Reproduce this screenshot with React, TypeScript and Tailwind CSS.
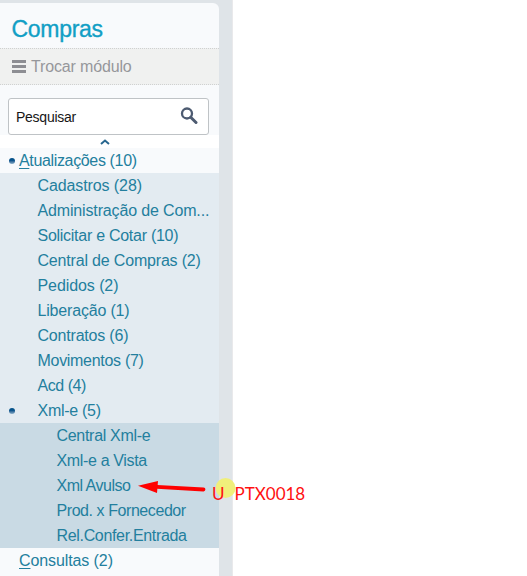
type Item = { label: string; tracking: string; open?: boolean };

const groups: Item[] = [
  { label: 'Cadastros (28)', tracking: 'tracking-[-0.1px]' },
  { label: 'Administração de Com...', tracking: 'tracking-[-0.15px]' },
  { label: 'Solicitar e Cotar (10)', tracking: 'tracking-[-0.27px]' },
  { label: 'Central de Compras (2)', tracking: 'tracking-[-0.18px]' },
  { label: 'Pedidos (2)', tracking: 'tracking-[-0.08px]' },
  { label: 'Liberação (1)', tracking: 'tracking-[-0.18px]' },
  { label: 'Contratos (6)', tracking: 'tracking-[-0.2px]' },
  { label: 'Movimentos (7)', tracking: 'tracking-[-0.3px]' },
  { label: 'Acd (4)', tracking: 'tracking-[-0.45px]' },
  { label: 'Xml-e (5)', tracking: 'tracking-[-0.28px]', open: true },
];

const routines: Item[] = [
  { label: 'Central Xml-e', tracking: 'tracking-[-0.3px]' },
  { label: 'Xml-e a Vista', tracking: 'tracking-[-0.35px]' },
  { label: 'Xml Avulso', tracking: 'tracking-[-0.5px]' },
  { label: 'Prod. x Fornecedor', tracking: 'tracking-[-0.43px]' },
  { label: 'Rel.Confer.Entrada', tracking: 'tracking-[-0.33px]' },
];

function Bullet() {
  return <span className="h-[6px] w-[6px] shrink-0 rounded-full bg-linear-to-b from-[#06538b] from-40% to-[#8bb0c9]" />;
}

function Row({ item, indent }: { item: Item; indent: string }) {
  return (
    <div className="flex h-[25px] items-center pl-[9px]">
      <span className="flex w-[6px] shrink-0">{item.open && <Bullet />}</span>
      <span className={`${indent} ${item.tracking} whitespace-nowrap`}>{item.label}</span>
    </div>
  );
}

export default function App() {
  return (
    <div className="relative h-[576px] w-[527px] overflow-hidden bg-white font-['Liberation_Sans',Arial,sans-serif]">
      <div className="h-full w-[233px] border-r border-[#e9e9eb] bg-[#dfe4e8] pt-[3px]">
        <aside className="h-full w-[219px] overflow-hidden rounded-tr-[6px] bg-[#f8fafc] text-[16px] leading-[25px] text-[#237f9e]">
          <h1 className="flex h-[45px] items-center pt-[8px] pl-[11.5px] text-[23px] tracking-[-0.3px] text-[#129fc5] [-webkit-text-stroke:0.35px_#129fc5]">Compras</h1>
          <div className="flex h-[37px] items-center border-y border-dotted border-[#cfd1d1] bg-[#f0f1f0] pl-[12px] text-[16px] tracking-[-0.15px] text-[#96979b]">
            <span className="mr-[5px] flex flex-col gap-[2px]">
              <i className="h-[3px] w-[14px] bg-[#8d8e93]" />
              <i className="h-[3px] w-[14px] bg-[#8d8e93]" />
              <i className="h-[3px] w-[14px] bg-[#8d8e93]" />
            </span>
            <span className="pb-px">Trocar módulo</span>
          </div>
          <div className="mt-[13px] ml-[8px] flex h-[37px] w-[201px] items-center rounded-[3px] border border-[#bfc3c6] bg-white pl-[7px] text-[14px] tracking-[-0.25px] text-[#161616]">
            <span className="pt-px">Pesquisar</span>
            <svg className="mt-[-2px] mr-[10px] ml-auto" width="18" height="18" viewBox="0 0 18 18" fill="none" stroke="#4d5b71">
              <circle cx="7" cy="6.5" r="5" strokeWidth="2.3" />
              <path d="M10.7 10.2 16 15.5" strokeWidth="3" strokeLinecap="round" />
            </svg>
          </div>
          <div className="flex h-[13px] items-center justify-center bg-white pr-[10px]">
            <svg width="10" height="6" viewBox="0 0 10 6" fill="none">
              <path d="M1 5 5 1.5 9 5" stroke="#28678f" strokeWidth="2" />
            </svg>
          </div>
          <div className="flex h-[25px] items-center pl-[9px]">
            <Bullet />
            <span className="ml-[4px] tracking-[-0.35px]"><u className="underline-offset-2">A</u>tualizações (10)</span>
          </div>
          <div className="bg-[#e3ebf1]">
            {groups.map((item) => <Row key={item.label} item={item} indent="ml-[22.5px]" />)}
          </div>
          <div className="bg-[#c9dae4]">
            {routines.map((item) => <Row key={item.label} item={item} indent="ml-[41.5px]" />)}
          </div>
          <div className="flex h-[25px] items-center pl-[19px]">
            <span className="tracking-[-0.1px]"><u className="underline-offset-2">C</u>onsultas (2)</span>
          </div>
        </aside>
      </div>
      <svg className="absolute top-[476px] left-[136px]" width="104" height="24" viewBox="136 476 104 24">
        <circle cx="225.5" cy="488" r="10" fill="#f0ef7b" />
        <path d="m157 486.8 46.5 2.7" stroke="#ff0000" strokeWidth="3.8" strokeLinecap="round" />
        <path d="m138 485.7 20-4.7-1 12Z" fill="#ff0000" />
      </svg>
      <div className="absolute top-[484px] left-[212px] flex font-['Lato',sans-serif] text-[17px] leading-[20px] text-[#ff1010]">
        <span className="w-[22.5px]">U</span>
        <span>PTX0018</span>
      </div>
    </div>
  );
}
